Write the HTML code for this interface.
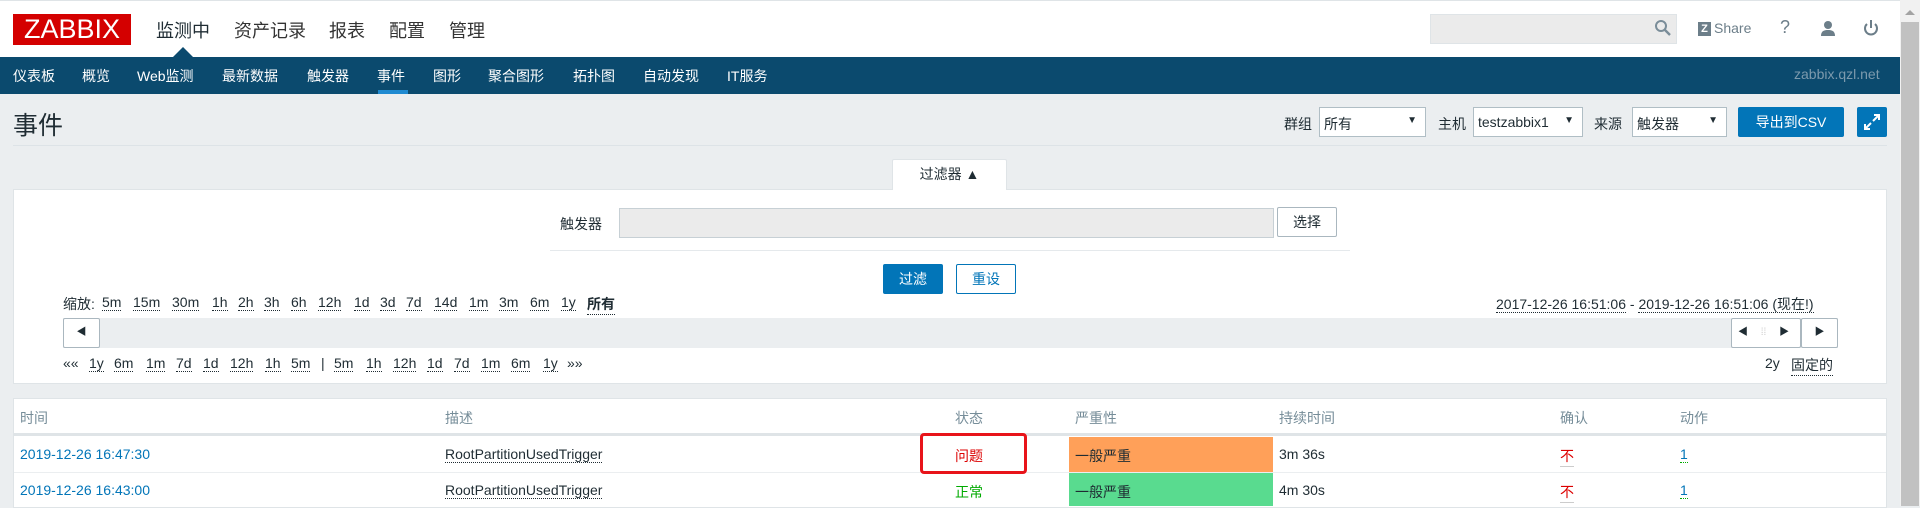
<!DOCTYPE html>
<html><head><meta charset="utf-8"><style>
*{margin:0;padding:0;box-sizing:border-box}
body{width:1920px;height:506px;overflow:hidden;background:#ebeef0;font-family:"Liberation Sans","Noto Sans CJK SC",sans-serif;font-size:14px;color:#1f2c33;position:relative}
.a{position:absolute;white-space:nowrap}
.u{border-bottom:1px dotted #1f2c33}
.nav>span{position:absolute;top:66px;color:#fff;font-size:14px}
.sel{position:absolute;top:107px;height:30px;background:#fff;border:1px solid #b0bec5;padding:6px 4px;font-size:14px}
.sel:after{content:"▼";position:absolute;right:8px;top:7px;font-size:10px}
.z>span{position:absolute;top:294px;white-space:nowrap}
.b>span{position:absolute;top:355px;white-space:nowrap}
</style></head><body>
<div class="a" style="left:0;top:0;width:1900px;height:57px;background:#fff;border-top:1px solid #dfe4e7"></div>
<div class="a" style="left:13px;top:14px;width:118px;height:31px;background:#d40000;color:#fff;font-size:27px;line-height:31px;text-align:center;letter-spacing:0">ZABBIX</div>
<div class="a" style="left:156px;top:17px;font-size:18px">监测中</div>
<div class="a" style="left:234px;top:17px;font-size:18px;color:#333">资产记录</div>
<div class="a" style="left:329px;top:17px;font-size:18px;color:#333">报表</div>
<div class="a" style="left:389px;top:17px;font-size:18px;color:#333">配置</div>
<div class="a" style="left:449px;top:17px;font-size:18px;color:#333">管理</div>
<div class="a" style="left:173px;top:47px;width:0;height:0;border-left:10px solid transparent;border-right:10px solid transparent;border-bottom:10px solid #0b4a6e"></div>
<div class="a" style="left:0;top:57px;width:1900px;height:37px;background:#0b4a6e"></div>
<div class="nav">
<span style="left:13px">仪表板</span><span style="left:82px">概览</span><span style="left:137px">Web监测</span><span style="left:222px">最新数据</span><span style="left:307px">触发器</span><span style="left:377px">事件</span><span style="left:433px">图形</span><span style="left:488px">聚合图形</span><span style="left:573px">拓扑图</span><span style="left:643px">自动发现</span><span style="left:727px">IT服务</span>
<span style="left:1794px;color:#7c9aad">zabbix.qzl.net</span></div>
<div class="a" style="left:378px;top:90px;width:30px;height:4px;background:#1f8ad1"></div>
<div class="a" style="left:1430px;top:14px;width:247px;height:30px;background:#ebebeb;border:1px solid #dfe4e7"></div>
<svg class="a" style="left:1654px;top:19px" width="18" height="18"><circle cx="7" cy="7" r="5" fill="none" stroke="#7a8d99" stroke-width="2"/><path d="M11 11l5 5" stroke="#7a8d99" stroke-width="2.4"/></svg>
<div class="a" style="left:1698px;top:22px;width:13px;height:14px;background:#6c7e89;color:#fff;font-size:11px;font-weight:bold;text-align:center;line-height:14px">Z</div>
<div class="a" style="left:1714px;top:20px;color:#6c7e89;font-size:14px">Share</div>
<div class="a" style="left:1780px;top:17px;color:#6c7e89;font-size:18px">?</div>
<svg class="a" style="left:1820px;top:20px" width="16" height="16"><circle cx="8" cy="5" r="4" fill="#6c7e89"/><path d="M1 16c0-5 3-6 7-6s7 1 7 6z" fill="#6c7e89"/></svg>
<svg class="a" style="left:1863px;top:19px" width="16" height="18"><path d="M8 1v8" stroke="#6c7e89" stroke-width="2"/><path d="M4 5a6 6 0 1 0 8 0" fill="none" stroke="#6c7e89" stroke-width="2"/></svg>
<div class="a" style="left:1900px;top:0;width:20px;height:506px;background:#f1f1f1"></div>
<div class="a" style="left:1901px;top:22px;width:18px;height:484px;background:#c1c1c1"></div>
<div class="a" style="left:1905px;top:10px;border-left:5px solid transparent;border-right:5px solid transparent;border-bottom:5px solid #a3a3a3"></div>

<div class="a" style="left:13px;top:106px;font-size:25px">事件</div>
<div class="a" style="left:13px;top:145px;width:1874px;height:1px;background:#dde3e7"></div>
<div class="a" style="left:1284px;top:114px">群组</div>
<div class="sel" style="left:1319px;width:107px">所有</div>
<div class="a" style="left:1438px;top:114px">主机</div>
<div class="sel" style="left:1473px;width:110px">testzabbix1</div>
<div class="a" style="left:1594px;top:114px">来源</div>
<div class="sel" style="left:1632px;width:95px">触发器</div>
<div class="a" style="left:1738px;top:107px;width:106px;height:30px;background:#0275b8;border-radius:2px;color:#fff;text-align:center;line-height:30px">导出到CSV</div>
<div class="a" style="left:1857px;top:107px;width:30px;height:30px;background:#0275b8;border-radius:2px"></div>
<svg class="a" style="left:1863px;top:113px" width="18" height="18"><path d="M10 8l6-6M11 2h5v5M8 10l-6 6M2 11v5h5" fill="none" stroke="#fff" stroke-width="2"/></svg>

<div class="a" style="left:892px;top:159px;width:115px;height:31px;background:#fff;border:1px solid #dfe4e7;border-bottom:none;border-radius:2px 2px 0 0;text-align:center;line-height:28px;z-index:2">过滤器 ▲</div>
<div class="a" style="left:13px;top:189px;width:1874px;height:195px;background:#fff;border:1px solid #dfe4e7"></div>
<div class="a" style="left:560px;top:214px">触发器</div>
<div class="a" style="left:619px;top:208px;width:655px;height:30px;background:#ebebeb;border:1px solid #c7d0d5"></div>
<div class="a" style="left:1277px;top:207px;width:60px;height:30px;background:#fff;border:1px solid #aab7bf;border-radius:2px;text-align:center;line-height:28px">选择</div>
<div class="a" style="left:550px;top:250px;width:800px;height:1px;background:#e5e9ec"></div>
<div class="a" style="left:883px;top:264px;width:60px;height:30px;background:#0275b8;border-radius:2px;color:#fff;text-align:center;line-height:30px">过滤</div>
<div class="a" style="left:956px;top:264px;width:60px;height:30px;background:#fff;border:1px solid #0275b8;border-radius:2px;color:#0275b8;text-align:center;line-height:28px">重设</div>
<div class="z">
<span style="left:63px">缩放:</span><span class="u" style="left:102px">5m</span><span class="u" style="left:133px">15m</span><span class="u" style="left:172px">30m</span><span class="u" style="left:212px">1h</span><span class="u" style="left:238px">2h</span><span class="u" style="left:264px">3h</span><span class="u" style="left:291px">6h</span><span class="u" style="left:318px">12h</span><span class="u" style="left:354px">1d</span><span class="u" style="left:380px">3d</span><span class="u" style="left:406px">7d</span><span class="u" style="left:434px">14d</span><span class="u" style="left:469px">1m</span><span class="u" style="left:499px">3m</span><span class="u" style="left:530px">6m</span><span class="u" style="left:561px">1y</span><span class="u" style="left:587px;font-weight:bold">所有</span>
<span style="left:1496px"><span class="u">2017-12-26 16:51:06</span> - <span class="u">2019-12-26 16:51:06 (现在!)</span></span></div>
<div class="a" style="left:63px;top:318px;width:1775px;height:30px;background:#ebeef0"></div>
<div class="a" style="left:63px;top:318px;width:37px;height:30px;background:#fff;border:1px solid #aab7bf;border-radius:2px;font-size:10px;text-align:center;line-height:28px">◀</div>
<div class="a" style="left:1731px;top:318px;width:70px;height:30px;background:#fff;border:1px solid #aab7bf;border-radius:2px;font-size:10px;line-height:28px;padding-left:6px">◀ <span style="color:#ccc;margin:0 10px">⁞⁞</span> ▶</div>
<div class="a" style="left:1801px;top:318px;width:37px;height:30px;background:#fff;border:1px solid #aab7bf;border-radius:2px;font-size:10px;text-align:center;line-height:28px">▶</div>
<div class="b">
<span style="left:63px">««</span><span class="u" style="left:89px">1y</span><span class="u" style="left:114px">6m</span><span class="u" style="left:146px">1m</span><span class="u" style="left:176px">7d</span><span class="u" style="left:203px">1d</span><span class="u" style="left:230px">12h</span><span class="u" style="left:265px">1h</span><span class="u" style="left:291px">5m</span><span style="left:321px">|</span><span class="u" style="left:334px">5m</span><span class="u" style="left:366px">1h</span><span class="u" style="left:393px">12h</span><span class="u" style="left:427px">1d</span><span class="u" style="left:454px">7d</span><span class="u" style="left:481px">1m</span><span class="u" style="left:511px">6m</span><span class="u" style="left:543px">1y</span><span style="left:567px">»»</span>
<span style="left:1765px">2y</span><span class="u" style="left:1791px">固定的</span></div>

<div class="a" style="left:13px;top:398px;width:1874px;height:110px;background:#fff;border:1px solid #dfe4e7"></div>
<div class="a" style="left:20px;top:408px;color:#768d99">时间</div>
<div class="a" style="left:445px;top:408px;color:#768d99">描述</div>
<div class="a" style="left:955px;top:408px;color:#768d99">状态</div>
<div class="a" style="left:1075px;top:408px;color:#768d99">严重性</div>
<div class="a" style="left:1279px;top:408px;color:#768d99">持续时间</div>
<div class="a" style="left:1560px;top:408px;color:#768d99">确认</div>
<div class="a" style="left:1680px;top:408px;color:#768d99">动作</div>
<div class="a" style="left:14px;top:433px;width:1872px;height:3px;background:#dfe4e7"></div>
<div class="a" style="left:14px;top:472px;width:1872px;height:1px;background:#ebeef0"></div>
<div class="a" style="left:1069px;top:437px;width:204px;height:35px;background:#ffa059"></div>
<div class="a" style="left:1069px;top:473px;width:204px;height:33px;background:#59db8f"></div>
<div class="a" style="left:20px;top:446px;color:#0275b8">2019-12-26 16:47:30</div>
<div class="a u" style="left:445px;top:446px">RootPartitionUsedTrigger</div>
<div class="a" style="left:955px;top:446px;color:#dc0000">问题</div>
<div class="a" style="left:1075px;top:446px">一般严重</div>
<div class="a" style="left:1279px;top:446px">3m 36s</div>
<div class="a" style="left:1560px;top:446px;color:#dc0000;border-bottom:1px solid #ccc">不</div>
<div class="a" style="left:1680px;top:446px;color:#0275b8;border-bottom:1px dotted #0a0">1</div>
<div class="a" style="left:20px;top:482px;color:#0275b8">2019-12-26 16:43:00</div>
<div class="a u" style="left:445px;top:482px">RootPartitionUsedTrigger</div>
<div class="a" style="left:955px;top:482px;color:#00aa00">正常</div>
<div class="a" style="left:1075px;top:482px">一般严重</div>
<div class="a" style="left:1279px;top:482px">4m 30s</div>
<div class="a" style="left:1560px;top:482px;color:#dc0000;border-bottom:1px solid #ccc">不</div>
<div class="a" style="left:1680px;top:482px;color:#0275b8;border-bottom:1px dotted #0a0">1</div>
<div class="a" style="left:920px;top:433px;width:107px;height:41px;border:3px solid #e8141a;border-radius:4px"></div>
</body></html>
